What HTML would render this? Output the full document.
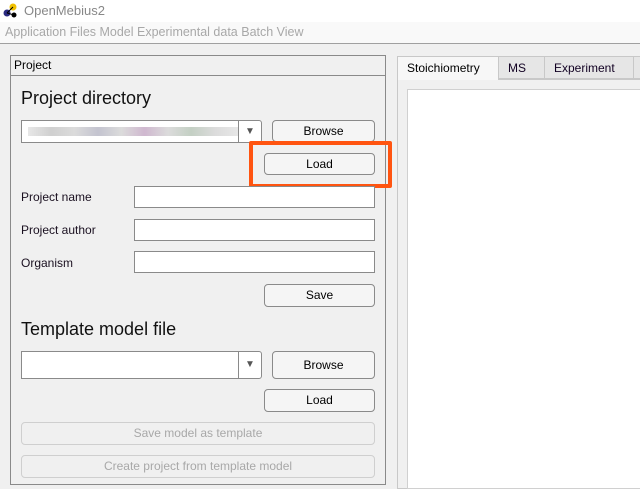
<!DOCTYPE html>
<html><head><style>
*{margin:0;padding:0;box-sizing:border-box}
body{width:640px;height:480px;background:#f0f0f0;font-family:"Liberation Sans",sans-serif;font-size:12px;color:#000;position:relative;overflow:hidden}
.a{position:absolute}
.btn{position:absolute;border:1px solid #8a8a8a;border-radius:4px;background:#f5f5f5;text-align:center;font-size:12px}
.dis{border-color:#cfcfcf;color:#a8a8a8;background:#f0f0f0}
.tb{position:absolute;background:#fff;border:1px solid #8a8a8a}
.lbl{position:absolute;font-size:12px;color:#1a1020}
</style></head><body>
<div class="a" style="left:0;top:0;width:640px;height:22px;background:#fff"></div>
<svg class="a" style="left:3px;top:3px" width="14" height="16"><circle cx="10" cy="4" r="3.5" fill="#f0c000"/><circle cx="4" cy="10" r="3.5" fill="#2a2a80"/><circle cx="11" cy="12" r="2.5" fill="#000"/><line x1="4" y1="10" x2="10" y2="4" stroke="#000"/><line x1="4" y1="10" x2="11" y2="12" stroke="#000"/></svg>
<div class="a" style="left:24px;top:3px;font-size:13px;color:#888">OpenMebius2</div>
<div class="a" style="left:0;top:22px;width:640px;height:22px;background:#f9f9f9;border-bottom:1px solid #a0a0a0"></div>
<div class="a" style="left:5px;top:25px;font-size:12.5px;color:#a8a8a8;white-space:nowrap">Application Files Model Experimental data Batch View</div>

<div class="a" style="left:10px;top:55px;width:376px;height:430px;border:1px solid #8a8a8a"></div>
<div class="a" style="left:11px;top:75px;width:374px;height:1px;background:#8a8a8a"></div>
<div class="a" style="left:14px;top:58px;font-size:12px">Project</div>
<div class="a" style="left:21px;top:88px;font-size:18px;color:#111">Project directory</div>
<div class="tb" style="left:21px;top:120px;width:241px;height:23px;border-radius:0 3px 3px 0"></div>
<div class="a" style="left:28px;top:127px;width:210px;height:9px;background:linear-gradient(90deg,#ddd,#bbb,#ccc,#aab,#ccc,#b9b,#ccc,#aba,#ccc,#ddd);opacity:.7"></div>
<div class="a" style="left:238px;top:121px;width:1px;height:21px;background:#8a8a8a"></div>
<div class="a" style="left:245px;top:126px;font-size:10px;color:#555">▼</div>
<div class="btn" style="left:272px;top:120px;width:103px;height:22px;line-height:20px">Browse</div>
<div class="btn" style="left:264px;top:153px;width:111px;height:22px;line-height:20px">Load</div>
<div class="a" style="left:249px;top:141px;width:143px;height:47px;border:4px solid #ff5410;border-radius:2px"></div>

<div class="lbl" style="left:21px;top:190px">Project name</div>
<div class="tb" style="left:134px;top:186px;width:241px;height:22px"></div>
<div class="lbl" style="left:21px;top:223px">Project author</div>
<div class="tb" style="left:134px;top:219px;width:241px;height:22px"></div>
<div class="lbl" style="left:21px;top:256px">Organism</div>
<div class="tb" style="left:134px;top:251px;width:241px;height:22px"></div>
<div class="btn" style="left:264px;top:284px;width:111px;height:23px;line-height:21px">Save</div>

<div class="a" style="left:21px;top:319px;font-size:18px;color:#111">Template model file</div>
<div class="tb" style="left:21px;top:351px;width:241px;height:28px;border-radius:0 3px 3px 0"></div>
<div class="a" style="left:238px;top:352px;width:1px;height:26px;background:#8a8a8a"></div>
<div class="a" style="left:245px;top:359px;font-size:10px;color:#555">▼</div>
<div class="btn" style="left:272px;top:351px;width:103px;height:28px;line-height:26px">Browse</div>
<div class="btn" style="left:264px;top:389px;width:111px;height:23px;line-height:21px">Load</div>
<div class="btn dis" style="left:21px;top:422px;width:354px;height:23px;line-height:21px">Save model as template</div>
<div class="btn dis" style="left:21px;top:455px;width:354px;height:23px;line-height:21px">Create project from template model</div>

<div class="a" style="left:397px;top:79px;width:250px;height:410px;border:1px solid #c8c8c8;background:#f0f0f0"></div>
<div class="a" style="left:397px;top:56px;width:102px;height:24px;border:1px solid #c8c8c8;border-bottom:none;background:#f7f7f7;padding:4px 0 0 9px">Stoichiometry</div>
<div class="a" style="left:498px;top:56px;width:47px;height:23px;border:1px solid #c8c8c8;background:#e6e6e6;padding:4px 0 0 9px;color:#102">MS</div>
<div class="a" style="left:544px;top:56px;width:90px;height:23px;border:1px solid #c8c8c8;background:#e6e6e6;padding:4px 0 0 9px;color:#102">Experiment</div>
<div class="a" style="left:633px;top:56px;width:20px;height:23px;border:1px solid #c8c8c8;background:#e6e6e6"></div>
<div class="a" style="left:407px;top:89px;width:240px;height:400px;background:#fff;border:1px solid #d0d0d0"></div>
</body></html>
